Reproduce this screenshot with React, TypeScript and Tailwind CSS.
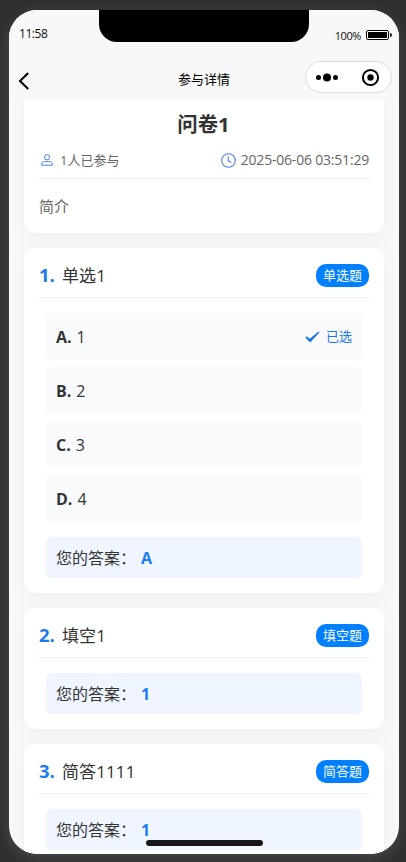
import React from "react";

type Option = { key: string; label: string; chosen?: boolean };

type Question = {
  title: string;
  type: string;
  options?: Option[];
  answer: string;
};

const questions: Question[] = [
  {
    title: "单选1",
    type: "单选题",
    options: [
      { key: "A.", label: "1", chosen: true },
      { key: "B.", label: "2" },
      { key: "C.", label: "3" },
      { key: "D.", label: "4" },
    ],
    answer: "A",
  },
  { title: "填空1", type: "填空题", answer: "1" },
  { title: "简答1111", type: "简答题", answer: "1" },
];

function StatusBar() {
  return (
    <div className="flex h-[50px] items-start justify-between pl-[10px] pr-[7px]">
      <span className="pt-[15px] text-[12px] leading-[18px] tracking-[-0.45px] text-[#111]">11:58</span>
      <div className="flex items-center pt-[16px]">
        <span className="pt-px text-[11px] leading-[17px] tracking-[-0.4px] text-[#111]">100%</span>
        <svg className="ml-[5px]" width="26" height="10" viewBox="0 0 26 10">
          <rect x="0.5" y="0.5" width="22" height="9" rx="1.5" fill="#fff" stroke="#000" />
          <rect x="2" y="2" width="19" height="6" rx="0.5" fill="#000" />
          <path d="M24 3.2h.6a1.2 1.2 0 0 1 1.2 1.2v1.2a1.2 1.2 0 0 1-1.2 1.2H24z" fill="#000" />
        </svg>
      </div>
    </div>
  );
}

function NavBar() {
  return (
    <div className="grid h-[41px] grid-cols-[1fr_auto_1fr] pl-[9px] pr-[7px]">
      <svg className="mt-[12px]" width="12" height="18" viewBox="0 0 12 18">
        <path d="M10.2 1L2 9l8.2 8" fill="none" stroke="#000" strokeWidth="2.1" />
      </svg>
      <span className="mr-[2px] pt-[9px] text-[13px] leading-[20px] text-black">参与详情</span>
      <div className="mt-[1px] flex h-[32px] w-[87px] items-center justify-self-end rounded-full border border-[#dcdcdc] bg-white">
        <svg width="85" height="30" viewBox="0 0 85 30">
          <circle cx="12.5" cy="15.5" r="2.5" />
          <circle cx="21" cy="15.5" r="4" />
          <circle cx="29.5" cy="15.5" r="2.5" />
          <circle cx="64.5" cy="15.5" r="7.6" fill="none" stroke="#000" strokeWidth="2" />
          <circle cx="64.5" cy="15.5" r="3.2" />
        </svg>
      </div>
    </div>
  );
}

function SummaryCard() {
  return (
    <section className="h-[132px] shrink-0 rounded-b-xl bg-white px-[15px] shadow-[0_4px_20px_rgba(0,0,0,0.05)]">
      <h1 className="pr-px pt-[8px] text-center text-[20.4px] font-bold leading-[30px] text-[#333]">问卷1</h1>
      <div className="mt-[9px] flex h-[31px] items-start justify-between border-b border-[#eee] text-[13px] leading-[24px] text-[#666]">
        <div className="flex items-center">
          <svg className="ml-[2px] mr-[7px]" width="12" height="12" viewBox="0 0 12 12" fill="none" stroke="#4a7fe8" strokeWidth="1">
            <circle cx="6" cy="3.3" r="2.6" />
            <path d="M.7 11.2V10c0-1.6 1.2-2.4 2.8-2.4h5c1.6 0 2.8.8 2.8 2.4v1.2z" />
          </svg>
          <span>1人已参与</span>
        </div>
        <div className="flex items-center">
          <svg className="mr-[5px]" width="15" height="15" viewBox="0 0 15 15" fill="none" stroke="#4a7fe8" strokeWidth="1.1">
            <circle cx="7.5" cy="7.5" r="6.8" />
            <path d="M7.3 3.2v4.6l3 1.7" />
          </svg>
          <span className="text-[14px] tracking-[-0.2px]">2025-06-06 03:51:29</span>
        </div>
      </div>
      <p className="pt-[15px] text-[15px] leading-[24px] text-[#666]">简介</p>
    </section>
  );
}

function OptionRow({ option }: { option: Option }) {
  return (
    <li className="flex h-[47px] items-center justify-between rounded-md bg-[#f8fafc] px-[10px] text-[#333]">
      <div className="flex items-center gap-[5px] text-[16px] leading-[24px]">
        <b className="font-bold">{option.key}</b>
        <span>{option.label}</span>
      </div>
      {option.chosen && (
        <div className="flex items-center gap-[6px] text-[13px] text-[#1a73e8]">
          <svg width="15" height="12" viewBox="0 0 15 12" fill="#1a73e8">
            <path d="M.3 6.5L1.5 5.3l3.3 2.5L13.6.4l.9.8L5.2 11.4z" />
          </svg>
          <span>已选</span>
        </div>
      )}
    </li>
  );
}

function QuestionCard({ question, index }: { question: Question; index: number }) {
  return (
    <section className="shrink-0 rounded-xl bg-white p-[15px] shadow-[0_4px_20px_rgba(0,0,0,0.05)]">
      <header className="flex h-[35px] items-start justify-between border-b border-[#eee] pt-[1px]">
        <div className="flex items-start leading-[24px]">
          <b className="-mt-px w-[23px] text-[18.5px] font-bold text-[#1a7cf0]">{index}.</b>
          <span className="text-[17px] tracking-[0.1px] text-[#333]">{question.title}</span>
        </div>
        <span className="flex h-[23px] w-[53px] items-center justify-center rounded-[10px] bg-[#0080ff] text-[13px] text-white">
          {question.type}
        </span>
      </header>
      <div className="mx-[7px] pt-[15px]">
        {question.options && (
          <ul className="mb-[15px] flex flex-col gap-[7px]">
            {question.options.map((o) => (
              <OptionRow key={o.key} option={o} />
            ))}
          </ul>
        )}
        <div className="flex h-[41px] items-center rounded-md bg-[#eff6ff] px-[10px] text-[16px] leading-[24px]">
          <span className="w-[85px] whitespace-nowrap text-[#333]">您的答案：</span>
          <b className="font-bold text-[#1a7cf0]">{question.answer}</b>
        </div>
      </div>
    </section>
  );
}

export default function App() {
  return (
    <div className="h-[862px] w-[406px] overflow-hidden bg-[#303030] pl-[9px] pt-[10px] font-['Open_Sans','Noto_Sans_CJK_SC',sans-serif]">
      <div className="relative flex h-[844px] w-[390px] flex-col overflow-hidden rounded-[28px] bg-[#f7f9fb] shadow-[0_4px_14px_rgba(255,255,255,0.12)]">
        <div className="relative z-10 shrink-0 bg-[#f8f8f8]">
          <StatusBar />
          <NavBar />
        </div>
        <div className="absolute left-[90px] top-0 z-20 h-[32px] w-[210px] rounded-b-[18px] bg-black" />
        <main className="flex min-h-0 flex-1 flex-col gap-[15px] overflow-hidden px-[15px]">
          <SummaryCard />
          {questions.map((q, i) => (
            <QuestionCard key={q.title} question={q} index={i + 1} />
          ))}
        </main>
        <div className="absolute bottom-[8px] left-[137px] z-20 h-[6px] w-[117px] rounded-full bg-[#161616]" />
      </div>
    </div>
  );
}
